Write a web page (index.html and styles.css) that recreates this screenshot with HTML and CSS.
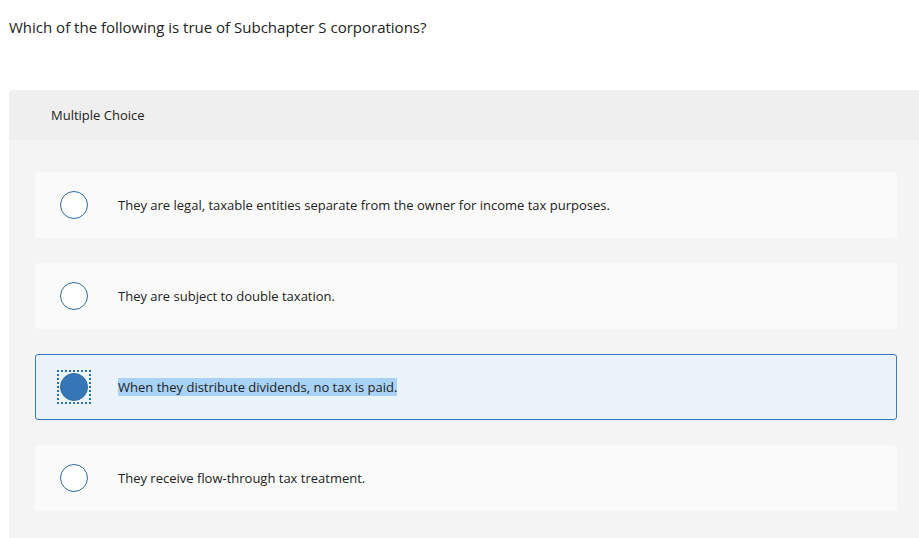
FILE: index.html
```html
<!DOCTYPE html>
<html>
<head>
<meta charset="utf-8">
<link rel="stylesheet" href="styles.css">
</head>
<body>
<div class="question">Which of the following is true of Subchapter S corporations?</div>
<div class="panel">
  <div class="panel-head">Multiple Choice</div>
  <div class="options">
    <div class="option">
      <span class="radio-wrap"><span class="radio"></span></span>
      <span class="label">They are legal, taxable entities separate from the owner for income tax purposes.</span>
    </div>
    <div class="option">
      <span class="radio-wrap"><span class="radio"></span></span>
      <span class="label">They are subject to double taxation.</span>
    </div>
    <div class="option selected">
      <span class="radio-wrap focus"><span class="radio checked"></span></span>
      <span class="label"><span class="hl">When they distribute dividends, no tax is paid.</span></span>
    </div>
    <div class="option">
      <span class="radio-wrap"><span class="radio"></span></span>
      <span class="label">They receive flow-through tax treatment.</span>
    </div>
  </div>
</div>
</body>
</html>
```
FILE: styles.css
```css
html, body {
  margin: 0;
  padding: 0;
  background: #ffffff;
}
body {
  font-family: "Open Sans", "Lato", sans-serif;
  color: #222222;
  width: 919px;
  height: 538px;
  overflow: hidden;
}
.question {
  padding: 17px 0 0 9px;
  height: 90px;
  box-sizing: border-box;
  font-size: 15px;
  line-height: 20px;
  color: #222;
}
.panel {
  margin-left: 9px;
  background: #f4f4f4;
  border-top-left-radius: 3px;
  height: 448px;
}
.panel-head {
  background: #efefef;
  height: 50px;
  box-sizing: border-box;
  padding: 16px 0 0 42px;
  font-size: 13px;
  line-height: 18px;
  color: #222;
  border-top-left-radius: 3px;
}
.options {
  padding: 32px 22px 0 26px;
  display: flex;
  flex-direction: column;
  gap: 25px;
}
.option {
  height: 66px;
  box-sizing: border-box;
  background: #fafafa;
  border-radius: 3px;
  border: 1px solid transparent;
  display: flex;
  align-items: center;
  padding-left: 21px;
}
.option.selected {
  background: #eaf2fa;
  border-color: #3a79b8;
}
.radio-wrap {
  width: 34px;
  height: 34px;
  box-sizing: border-box;
  display: flex;
  align-items: center;
  justify-content: center;
  border: 2px dotted transparent;
}
.radio-wrap.focus {
  border-color: #2c6fb2;
}
.radio {
  width: 28px;
  height: 28px;
  box-sizing: border-box;
  border-radius: 50%;
  border: 1.5px solid #2f6aa3;
  background: #ffffff;
}
.radio.checked {
  background: #3577b6;
  border-color: #2e6ba6;
}
.label {
  margin-left: 27px;
  font-size: 13px;
  line-height: 18px;
  color: #222;
}
.hl {
  background: #a9d2f7;
}
```
